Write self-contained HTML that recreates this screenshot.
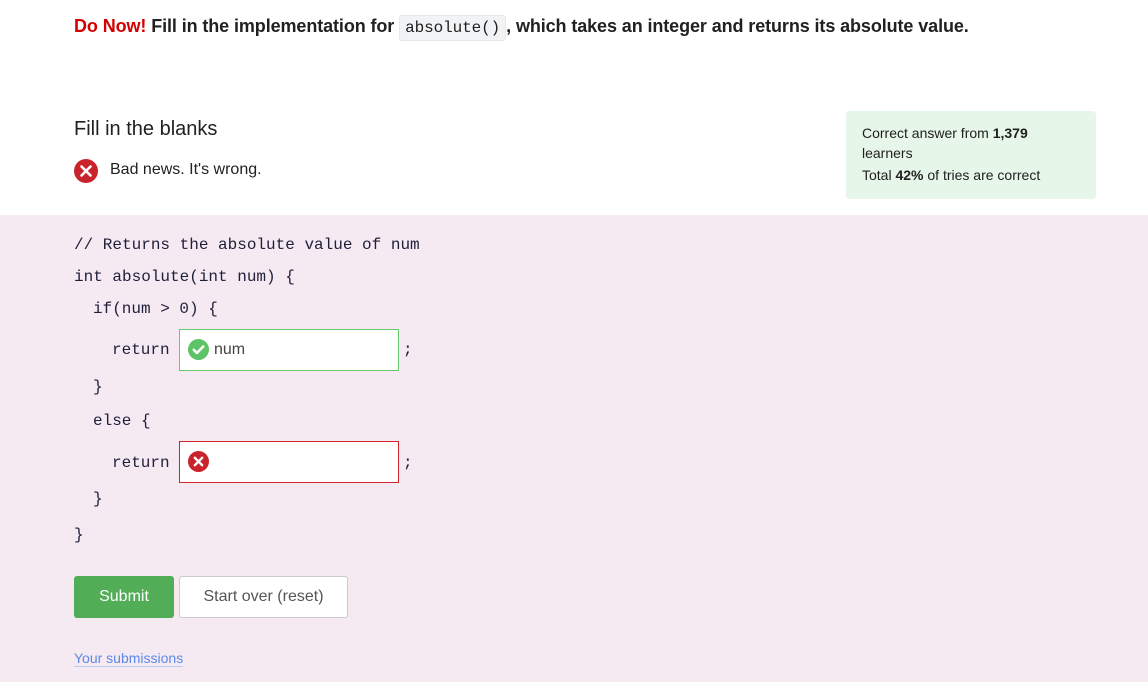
<!DOCTYPE html>
<html><head><meta charset="utf-8"><style>
*{margin:0;padding:0;box-sizing:border-box}
body{width:1148px;height:682px;background:#fff;font-family:"Liberation Sans",sans-serif;color:#212121;position:relative;overflow:hidden}
.a{position:absolute;white-space:nowrap}
.pink{position:absolute;left:0;top:215px;width:1148px;height:467px;background:#f5e9f2}
.mono{font-family:"Liberation Mono",monospace;font-size:16px;color:#1f1f3a}
code{font-family:"Liberation Mono",monospace;font-size:16px;font-weight:normal;background:#f1f3f5;border:1px solid #e6e8ea;border-radius:3px;padding:3px 5px}
.inp{position:absolute;width:220px;height:42px;background:#fff}
</style></head><body>
<div class="a" style="left:74px;top:16px;font-size:18px;font-weight:bold;letter-spacing:-0.1px"><span style="color:#d40000">Do Now!</span> Fill in the implementation for <code>absolute()</code>, which takes an integer and returns its absolute value.</div>
<div class="a" style="left:74px;top:118px;font-size:20px">Fill in the blanks</div>
<svg class="a" style="left:74px;top:159px" width="24" height="24" viewBox="0 0 24 24"><circle cx="12" cy="12" r="12" fill="#c9242b"/><path d="M7.5 7.5l9 9M16.5 7.5l-9 9" stroke="#fff" stroke-width="2.6" stroke-linecap="round"/></svg>
<div class="a" style="left:110px;top:161px;font-size:16px">Bad news. It's wrong.</div>
<div class="a" style="left:846px;top:111px;width:250px;height:88px;background:#e6f6e8;border-radius:4px"></div>
<div class="a" style="left:862px;top:123px;font-size:14px;line-height:20px">Correct answer from <b>1,379</b><br>learners</div>
<div class="a" style="left:862px;top:167px;font-size:14px">Total <b>42%</b> of tries are correct</div>
<div class="pink"></div>
<div class="a mono" style="left:74px;top:236px">// Returns the absolute value of num</div>
<div class="a mono" style="left:74px;top:268px">int absolute(int num) {</div>
<div class="a mono" style="left:93px;top:300px">if(num &gt; 0) {</div>
<div class="a mono" style="left:112px;top:341px">return</div>
<div class="inp" style="left:179px;top:329px;border:1px solid #66c96b"></div>
<svg class="a" style="left:188px;top:339px" width="21" height="21" viewBox="0 0 20 20"><circle cx="10" cy="10" r="10" fill="#5cc466"/><path d="M5.5 10.3l3 3 6-6.2" stroke="#fff" stroke-width="2.4" fill="none" stroke-linecap="round" stroke-linejoin="round"/></svg>
<div class="a" style="left:214px;top:341px;font-size:16px;color:#444">num</div>
<div class="a mono" style="left:403px;top:341px">;</div>
<div class="a mono" style="left:93px;top:378px">}</div>
<div class="a mono" style="left:93px;top:412px">else {</div>
<div class="a mono" style="left:112px;top:454px">return</div>
<div class="inp" style="left:179px;top:441px;border:1px solid #d0232a"></div>
<svg class="a" style="left:188px;top:451px" width="21" height="21" viewBox="0 0 20 20"><circle cx="10" cy="10" r="10" fill="#c9242b"/><path d="M6.5 6.5l7 7M13.5 6.5l-7 7" stroke="#fff" stroke-width="2.3" stroke-linecap="round"/></svg>
<div class="a mono" style="left:403px;top:454px">;</div>
<div class="a mono" style="left:93px;top:490px">}</div>
<div class="a mono" style="left:74px;top:526px">}</div>
<div class="a" style="left:74px;top:576px;width:100px;height:42px;background:#52ad57;border-radius:3px;color:#fff;font-size:16px;text-align:center;line-height:42px">Submit</div>
<div class="a" style="left:179px;top:576px;width:169px;height:42px;background:#fff;border:1px solid #ccc;border-radius:3px;color:#555;font-size:16px;text-align:center;line-height:40px">Start over (reset)</div>
<div class="a" style="left:74px;top:650px;font-size:14px;color:#5b8ae6;border-bottom:1px solid #b9cdf3;line-height:16px">Your submissions</div>
</body></html>
